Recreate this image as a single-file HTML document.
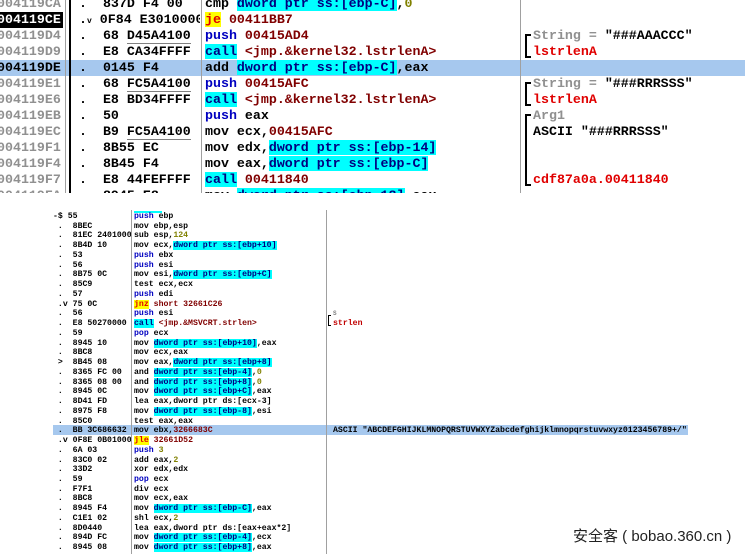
<!DOCTYPE html>
<html><head><meta charset="utf-8"><style>
*{margin:0;padding:0}
body{width:745px;height:554px;background:#fff;position:relative;overflow:hidden;font-family:"Liberation Mono",monospace;font-weight:bold}
.t{position:absolute;white-space:pre;font-size:13.3px;line-height:16px;height:16px}
.b{position:absolute;white-space:pre;font-size:8.2px;line-height:9.7px;height:9.7px}
.g{color:#909090}.k{color:#000}.bl{color:#0000c0}.r{color:#800000}.ol{color:#808000}.re{color:#e00000}
.c{background:#00ffff;color:#000080}.y{background:#ffff00;color:#e00000}
.line{position:absolute;background:#a0a0a0;width:1px}
.u{border-bottom:1px solid #808080}
</style></head><body>
<!-- top panel -->
<div style="position:absolute;left:0;top:60px;width:745px;height:16px;background:#a6c8ee"></div>
<div style="position:absolute;left:-3px;top:12px;width:66px;height:16px;background:#000"></div>
<div class="line" style="left:65px;top:0;height:193px"></div>
<div style="position:absolute;left:69px;top:0;width:2px;height:193px;background:#000"></div>
<div class="line" style="left:201px;top:0;height:193px"></div>
<div class="line" style="left:520px;top:0;height:193px"></div>

<div class="t g" style="left:-3px;top:-4px">004119CA</div>
<div class="t" style="left:-3px;top:12px;color:#fff">004119CE</div>
<div class="t g" style="left:-3px;top:28px">004119D4</div>
<div class="t g" style="left:-3px;top:44px">004119D9</div>
<div class="t k" style="left:-3px;top:60px">004119DE</div>
<div class="t g" style="left:-3px;top:76px">004119E1</div>
<div class="t g" style="left:-3px;top:92px">004119E6</div>
<div class="t g" style="left:-3px;top:108px">004119EB</div>
<div class="t g" style="left:-3px;top:124px">004119EC</div>
<div class="t g" style="left:-3px;top:140px">004119F1</div>
<div class="t g" style="left:-3px;top:156px">004119F4</div>
<div class="t g" style="left:-3px;top:172px">004119F7</div>
<div class="t g" style="left:-3px;top:188px;height:5px;overflow:hidden">004119FA</div>

<div style="position:absolute;left:79px;top:0;width:121px;height:193px;overflow:hidden">
<div class="t k" style="left:0;top:-4px">.  837D F4 00</div>
<div class="t k" style="left:0;top:12px">.<span style="font-size:8px">v</span> 0F84 E3010000</div>
<div class="t k" style="left:0;top:28px">.  68 <span class="u">D45A4100</span></div>
<div class="t k" style="left:0;top:44px">.  E8 CA34FFFF</div>
<div class="t k" style="left:0;top:60px">.  0145 F4</div>
<div class="t k" style="left:0;top:76px">.  68 <span class="u">FC5A4100</span></div>
<div class="t k" style="left:0;top:92px">.  E8 BD34FFFF</div>
<div class="t k" style="left:0;top:108px">.  50</div>
<div class="t k" style="left:0;top:124px">.  B9 <span class="u">FC5A4100</span></div>
<div class="t k" style="left:0;top:140px">.  8B55 EC</div>
<div class="t k" style="left:0;top:156px">.  8B45 F4</div>
<div class="t k" style="left:0;top:172px">.  E8 44FEFFFF</div>
<div class="t k" style="left:0;top:188px">.  8945 E8</div>
</div>

<div style="position:absolute;left:205px;top:0;width:314px;height:193px;overflow:hidden">
<div class="t k" style="left:0;top:-4px">cmp <span class="c">dword ptr ss:[ebp-C]</span>,<span class="ol">0</span></div>
<div class="t k" style="left:0;top:12px"><span class="y">je</span> <span class="r">00411BB7</span></div>
<div class="t k" style="left:0;top:28px"><span class="bl">push</span> <span class="r">00415AD4</span></div>
<div class="t k" style="left:0;top:44px"><span class="c">call</span> <span class="r">&lt;jmp.&amp;kernel32.lstrlenA&gt;</span></div>
<div class="t k" style="left:0;top:60px">add <span class="c">dword ptr ss:[ebp-C]</span>,eax</div>
<div class="t k" style="left:0;top:76px"><span class="bl">push</span> <span class="r">00415AFC</span></div>
<div class="t k" style="left:0;top:92px"><span class="c">call</span> <span class="r">&lt;jmp.&amp;kernel32.lstrlenA&gt;</span></div>
<div class="t k" style="left:0;top:108px"><span class="bl">push</span> eax</div>
<div class="t k" style="left:0;top:124px">mov ecx,<span class="r">00415AFC</span></div>
<div class="t k" style="left:0;top:140px">mov edx,<span class="c">dword ptr ss:[ebp-14]</span></div>
<div class="t k" style="left:0;top:156px">mov eax,<span class="c">dword ptr ss:[ebp-C]</span></div>
<div class="t k" style="left:0;top:172px"><span class="c">call</span> <span class="r">00411840</span></div>
<div class="t k" style="left:0;top:188px">mov <span class="c">dword ptr ss:[ebp-18]</span>,eax</div>
</div>

<!-- brackets -->
<div style="position:absolute;left:525px;top:34px;width:4px;height:20px;border:2px solid #000;border-right:none"></div>
<div style="position:absolute;left:525px;top:82px;width:4px;height:20px;border:2px solid #000;border-right:none"></div>
<div style="position:absolute;left:525px;top:114px;width:4px;height:68px;border:2px solid #000;border-right:none"></div>
<div class="t g" style="left:533px;top:28px">String = <span class="k">"###AAACCC"</span></div>
<div class="t re" style="left:533px;top:44px">lstrlenA</div>
<div class="t g" style="left:533px;top:76px">String = <span class="k">"###RRRSSS"</span></div>
<div class="t re" style="left:533px;top:92px">lstrlenA</div>
<div class="t g" style="left:533px;top:108px">Arg1</div>
<div class="t k" style="left:533px;top:124px">ASCII "###RRRSSS"</div>
<div class="t re" style="left:533px;top:172px">cdf87a0a.00411840</div>

<!-- bottom panel -->
<div style="position:absolute;left:53px;top:425px;width:635px;height:10px;background:#a6c8ee"></div>
<div class="line" style="left:131px;top:210px;height:344px"></div>
<div class="line" style="left:326px;top:210px;height:344px"></div>
<div style="position:absolute;left:134px;top:211px;width:28px;height:2px;background:#00ffff"></div>

<div style="position:absolute;left:0;top:212px;width:745px;height:342px">
<div style="position:absolute;left:53px;top:0;width:78px;height:342px;overflow:hidden">
<div class="b" style="top:0">-$ 55</div>
<div class="b" style="top:9.74px"> .  8BEC</div>
<div class="b" style="top:19.48px"> .  81EC 24010000</div>
<div class="b" style="top:29.22px"> .  8B4D 10</div>
<div class="b" style="top:38.96px"> .  53</div>
<div class="b" style="top:48.7px"> .  56</div>
<div class="b" style="top:58.44px"> .  8B75 0C</div>
<div class="b" style="top:68.18px"> .  85C9</div>
<div class="b" style="top:77.92px"> .  57</div>
<div class="b" style="top:87.66px"> .v 75 0C</div>
<div class="b" style="top:97.4px"> .  56</div>
<div class="b" style="top:107.14px"> .  E8 50270000</div>
<div class="b" style="top:116.88px"> .  59</div>
<div class="b" style="top:126.62px"> .  8945 10</div>
<div class="b" style="top:136.36px"> .  8BC8</div>
<div class="b" style="top:146.1px"> &gt;  8B45 08</div>
<div class="b" style="top:155.84px"> .  8365 FC 00</div>
<div class="b" style="top:165.58px"> .  8365 08 00</div>
<div class="b" style="top:175.32px"> .  8945 0C</div>
<div class="b" style="top:185.06px"> .  8D41 FD</div>
<div class="b" style="top:194.8px"> .  8975 F8</div>
<div class="b" style="top:204.54px"> .  85C0</div>
<div class="b" style="top:214.28px"> .  BB 3C686632</div>
<div class="b" style="top:224.02px"> .v 0F8E 0B010000</div>
<div class="b" style="top:233.76px"> .  6A 03</div>
<div class="b" style="top:243.5px"> .  83C0 02</div>
<div class="b" style="top:253.24px"> .  33D2</div>
<div class="b" style="top:262.98px"> .  59</div>
<div class="b" style="top:272.72px"> .  F7F1</div>
<div class="b" style="top:282.46px"> .  8BC8</div>
<div class="b" style="top:292.2px"> .  8945 F4</div>
<div class="b" style="top:301.94px"> .  C1E1 02</div>
<div class="b" style="top:311.68px"> .  8D0440</div>
<div class="b" style="top:321.42px"> .  894D FC</div>
<div class="b" style="top:331.16px"> .  8945 08</div>
</div>
<div style="position:absolute;left:134px;top:0;width:191px;height:342px;overflow:hidden">
<div class="b" style="top:0"><span class="bl">push</span> ebp</div>
<div class="b" style="top:9.74px">mov ebp,esp</div>
<div class="b" style="top:19.48px">sub esp,<span class="ol">124</span></div>
<div class="b" style="top:29.22px">mov ecx,<span class="c">dword ptr ss:[ebp+10]</span></div>
<div class="b" style="top:38.96px"><span class="bl">push</span> ebx</div>
<div class="b" style="top:48.7px"><span class="bl">push</span> esi</div>
<div class="b" style="top:58.44px">mov esi,<span class="c">dword ptr ss:[ebp+C]</span></div>
<div class="b" style="top:68.18px">test ecx,ecx</div>
<div class="b" style="top:77.92px"><span class="bl">push</span> edi</div>
<div class="b" style="top:87.66px"><span class="y">jnz</span> <span class="r">short 32661C26</span></div>
<div class="b" style="top:97.4px"><span class="bl">push</span> esi</div>
<div class="b" style="top:107.14px"><span class="c">call</span> <span class="r">&lt;jmp.&amp;MSVCRT.strlen&gt;</span></div>
<div class="b" style="top:116.88px"><span class="bl">pop</span> ecx</div>
<div class="b" style="top:126.62px">mov <span class="c">dword ptr ss:[ebp+10]</span>,eax</div>
<div class="b" style="top:136.36px">mov ecx,eax</div>
<div class="b" style="top:146.1px">mov eax,<span class="c">dword ptr ss:[ebp+8]</span></div>
<div class="b" style="top:155.84px">and <span class="c">dword ptr ss:[ebp-4]</span>,<span class="ol">0</span></div>
<div class="b" style="top:165.58px">and <span class="c">dword ptr ss:[ebp+8]</span>,<span class="ol">0</span></div>
<div class="b" style="top:175.32px">mov <span class="c">dword ptr ss:[ebp+C]</span>,eax</div>
<div class="b" style="top:185.06px">lea eax,dword ptr ds:[ecx-3]</div>
<div class="b" style="top:194.8px">mov <span class="c">dword ptr ss:[ebp-8]</span>,esi</div>
<div class="b" style="top:204.54px">test eax,eax</div>
<div class="b" style="top:214.28px">mov ebx,<span class="r">3266683C</span></div>
<div class="b" style="top:224.02px"><span class="y">jle</span> <span class="r">32661D52</span></div>
<div class="b" style="top:233.76px"><span class="bl">push</span> <span class="ol">3</span></div>
<div class="b" style="top:243.5px">add eax,<span class="ol">2</span></div>
<div class="b" style="top:253.24px">xor edx,edx</div>
<div class="b" style="top:262.98px"><span class="bl">pop</span> ecx</div>
<div class="b" style="top:272.72px">div ecx</div>
<div class="b" style="top:282.46px">mov ecx,eax</div>
<div class="b" style="top:292.2px">mov <span class="c">dword ptr ss:[ebp-C]</span>,eax</div>
<div class="b" style="top:301.94px">shl ecx,<span class="ol">2</span></div>
<div class="b" style="top:311.68px">lea eax,dword ptr ds:[eax+eax*2]</div>
<div class="b" style="top:321.42px">mov <span class="c">dword ptr ss:[ebp-4]</span>,ecx</div>
<div class="b" style="top:331.16px">mov <span class="c">dword ptr ss:[ebp+8]</span>,eax</div>
</div>
<div style="position:absolute;left:328px;top:103px;width:2px;height:9px;border:1px solid #000;border-right:none"></div>
<div class="b" style="left:333px;top:97.4px;color:#808080;font-size:6px">S</div>
<div class="b" style="left:333px;top:107.14px;color:#c00000">strlen</div>
<div class="b" style="left:333px;top:214.28px">ASCII "ABCDEFGHIJKLMNOPQRSTUVWXYZabcdefghijklmnopqrstuvwxyz0123456789+/"</div>
</div>

<div style="position:absolute;left:573px;top:525px;font-family:'Liberation Sans','Noto Sans CJK SC',sans-serif;font-weight:normal;font-size:15px;color:#222;white-space:pre">安全客 ( bobao.360.cn )</div>
</body></html>
